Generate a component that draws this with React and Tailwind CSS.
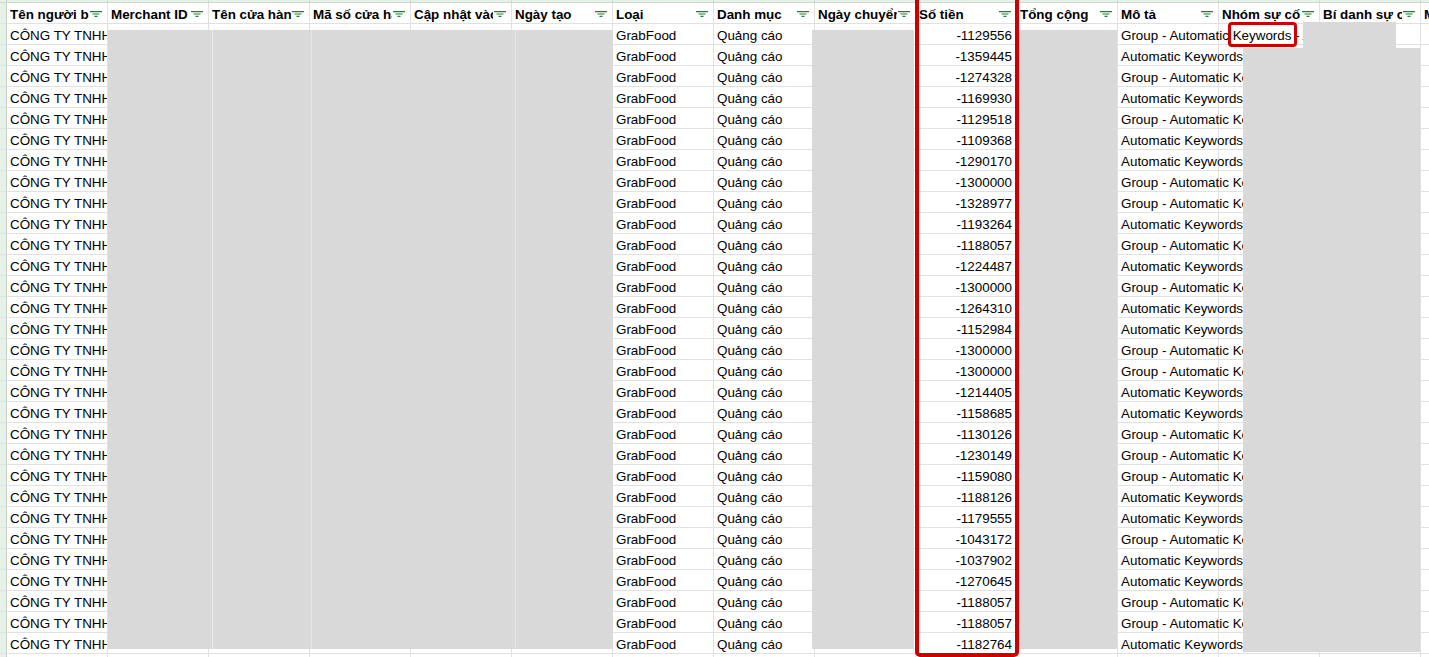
import React from 'react'

const headers = [
  'Tên người bán', 'Merchant ID', 'Tên cửa hàng', 'Mã số cửa hàng', 'Cập nhật vào', 'Ngày tạo',
  'Loại', 'Danh mục', 'Ngày chuyển', 'Số tiền', 'Tổng cộng', 'Mô tả', 'Nhóm sự cố', 'Bí danh sự cố', 'Mã',
]

const amounts = [
  -1129556, -1359445, -1274328, -1169930, -1129518, -1109368, -1290170, -1300000, -1328977, -1193264,
  -1188057, -1224487, -1300000, -1264310, -1152984, -1300000, -1300000, -1214405, -1158685, -1130126,
  -1230149, -1159080, -1188126, -1179555, -1043172, -1037902, -1270645, -1188057, -1188057, -1182764,
]

// G = có "Group - " phía trước
const kinds = 'GAGAGAAGGAGAGAAGGAAGGGAAGAAGGA'.split('')

const FilterIcon = () => (
  <svg width="12" height="6" viewBox="0 0 12 6" className="shrink-0">
    <path d="M0 0.6h12M2.5 3h7M4.5 5.4h3" stroke="#1e7e34" strokeWidth="1.1" fill="none" />
  </svg>
)

const Cell = ({ children, className = '' }) => (
  <div className={'w-[101px] shrink-0 h-full border-r border-[#e1e1e1] flex items-end leading-[16px] px-[3px] whitespace-nowrap ' + className}>
    {children}
  </div>
)

export default function App() {
  return (
    <div className="relative w-[1429px] h-[657px] overflow-hidden bg-white text-[13.4px] text-black" style={{ fontFamily: '"Liberation Sans", Arial, sans-serif' }}>
      {/* column letters strip */}
      <div className="flex h-[3px] bg-[#e6f2e8] border-b border-[#cfd8d0]">
        <div className="w-[7px] shrink-0 border-r border-[#c5cfc6]" />
        {headers.map((h, i) => (
          <div key={i} className="w-[101px] shrink-0 border-r border-[#d2dcd3]" />
        ))}
      </div>

      {/* header row */}
      <div className="flex h-[21px] border-b border-[#e1e1e1]">
        <div className="w-[7px] shrink-0 bg-[#e6f2e8] border-r border-[#c5cfc6]" />
        {headers.map((h, i) => (
          <div key={i} className="w-[101px] shrink-0 h-full border-r border-[#e1e1e1] flex items-end leading-[16px] pl-[3px] pr-[5px] font-bold">
            <span className="w-[79px] overflow-hidden whitespace-nowrap">{h}</span>
            <span className="ml-auto mb-[6px] flex"><FilterIcon /></span>
          </div>
        ))}
      </div>

      {/* data rows */}
      {amounts.map((a, r) => (
        <div key={r} className="flex h-[21px] border-b border-[#e1e1e1]">
          <div className="w-[7px] shrink-0 bg-[#e6f2e8] border-r border-[#c5cfc6]" />
          <Cell className="overflow-hidden">CÔNG TY TNHH GRAB</Cell>
          <Cell />
          <Cell />
          <Cell />
          <Cell />
          <Cell />
          <Cell>GrabFood</Cell>
          <Cell>Quảng cáo</Cell>
          <Cell />
          <Cell className="justify-end pr-[4px]">{a}</Cell>
          <Cell />
          <Cell className="relative z-10">
            {r === 0
              ? 'Group - Automatic Keywords - Ads'
              : kinds[r] === 'G'
                ? 'Group - Automatic Keywords'
                : 'Automatic Keywords'}
          </Cell>
          <Cell />
          <Cell />
          <Cell />
        </div>
      ))}
      <div className="flex h-[21px] border-b border-[#e1e1e1]">
        <div className="w-[7px] shrink-0 bg-[#e6f2e8] border-r border-[#c5cfc6]" />
        {headers.map((h, i) => (
          <Cell key={i} />
        ))}
      </div>

      {/* redactions */}
      <div className="absolute left-[108px] top-[30px] w-[505px] h-[619px] bg-[#d9d9d9] z-20" />
      <div className="absolute left-[212px] top-[30px] w-px h-[619px] bg-[#e9e9e9] z-20" />
      <div className="absolute left-[311px] top-[30px] w-px h-[619px] bg-[#e6e6e6] z-20" />
      <div className="absolute left-[515px] top-[30px] w-px h-[619px] bg-[#e6e6e6] z-20" />
      <div className="absolute left-[812px] top-[30px] w-[102px] h-[619px] bg-[#d9d9d9] z-20" />
      <div className="absolute left-[1019px] top-[30px] w-[98px] h-[619px] bg-[#d9d9d9] z-20" />
      <div className="absolute left-[1303px] top-[22px] w-[93px] h-[26px] bg-[#d9d9d9] z-20" />
      <div className="absolute left-[1243px] top-[48px] w-[177px] h-[604px] bg-[#d9d9d9] z-20" />

      {/* annotations */}
      <div className="absolute left-[915px] top-[-6px] w-[104px] h-[663px] border-[4px] border-[#cc0000] rounded-[5px] z-30" />
      <div className="absolute left-[1228px] top-[22px] w-[69px] h-[25px] border-[3px] border-[#cc0000] rounded-[4px] z-30" />
    </div>
  )
}
